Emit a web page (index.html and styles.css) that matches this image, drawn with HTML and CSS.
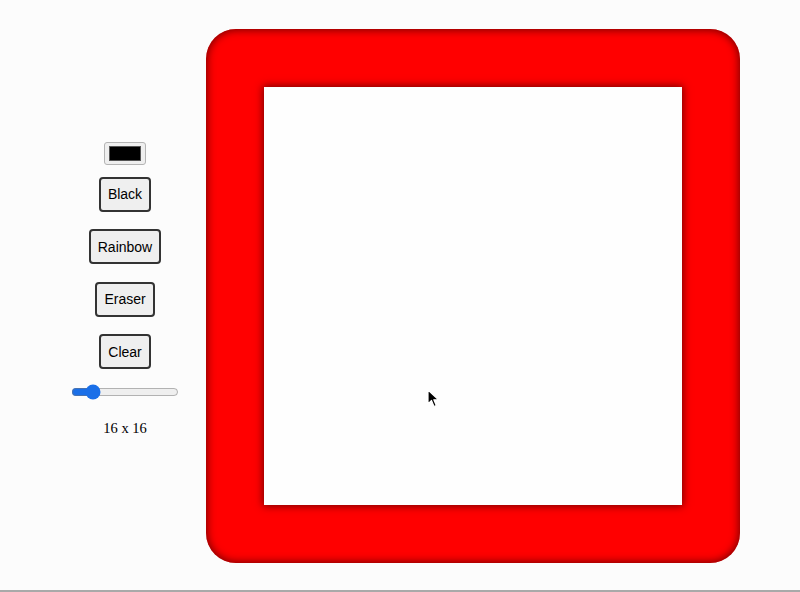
FILE: index.html
```html
<!DOCTYPE html>
<html>
<head>
<meta charset="utf-8">
<link rel="stylesheet" href="styles.css">
</head>
<body>
<div class="page">
  <div class="controls">
    <input class="color" type="color" value="#000000">
    <button class="btn">Black</button>
    <button class="btn">Rainbow</button>
    <button class="btn">Eraser</button>
    <button class="btn">Clear</button>
    <input class="slider" type="range" min="1" max="100" value="16">
    <p class="size">16 x 16</p>
  </div>
  <div class="frame">
    <div class="grid"></div>
  </div>
</div>
<svg class="cursor" width="14" height="20" viewBox="0 0 14 20"><path d="M1 1 L1 15 L4.5 11.5 L7 17.5 L9.3 16.5 L6.8 10.8 L11.5 10.8 Z" fill="#000" stroke="#fff" stroke-width="1.2" stroke-linejoin="round"/></svg>
</body>
</html>
```
FILE: styles.css
```css
html { height: 592px; }
body {
  margin: 0;
  height: 592px;
  box-sizing: border-box;
  padding-top: 2px;
  border-bottom: 2px solid #a9a9a9;
  background: #fcfcfc;
  font-family: "Liberation Serif", serif;
  overflow: hidden;
}
.page {
  height: 100%;
  display: flex;
  align-items: center;
  justify-content: center;
  gap: 16px;
}
.controls {
  width: 130px;
  display: flex;
  flex-direction: column;
  align-items: center;
  margin-top: -13px;
}
.color {
  width: 42px;
  height: 23px;
  padding: 0;
  margin: 0 0 12px;
  border: 1px solid #b4b4b4;
  border-radius: 3px;
  background: #efefef;
  box-sizing: border-box;
}
.color::-webkit-color-swatch-wrapper { padding: 3px 4px; }
.color::-webkit-color-swatch { border: 1px solid #555; border-radius: 0; }
.btn {
  height: 35px;
  padding: 0 7px;
  margin: 0 0 17.5px;
  font-family: "Liberation Sans", Arial, sans-serif;
  font-size: 14px;
  color: #000;
  background: #efefef;
  border: 2px solid #333;
  border-radius: 4px;
}
.btn:last-of-type { margin-bottom: 15px; }
.slider {
  width: 108px;
  margin: 0;
  accent-color: #1a6fe8;
}
.size {
  margin: 20px 0 0;
  font-size: 14.5px;
}
.frame {
  padding: 58px;
  background: #ff0000;
  border-radius: 30px;
  box-shadow: inset 0 0 8px 1px rgba(90, 0, 0, 0.85);
}
.grid {
  width: 418px;
  height: 418px;
  background: #fefefe;
  box-shadow: 0 0 8px 1px rgba(90, 0, 0, 0.85);
}
.cursor {
  position: absolute;
  left: 427px;
  top: 389px;
}
```
